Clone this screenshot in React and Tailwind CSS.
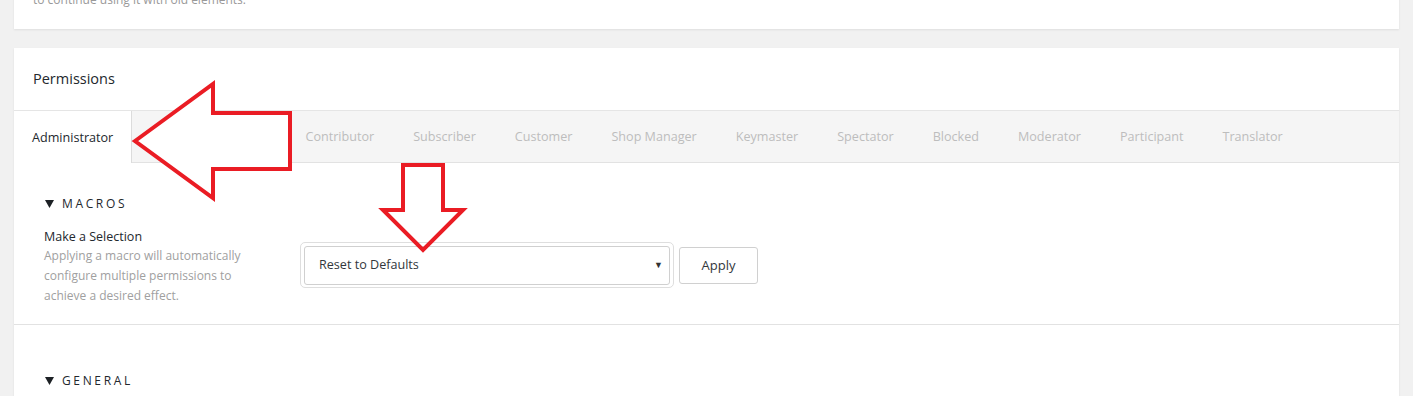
import React from "react";

const tabs = [
  "Administrator",
  "Editor",
  "Author",
  "Contributor",
  "Subscriber",
  "Customer",
  "Shop Manager",
  "Keymaster",
  "Spectator",
  "Blocked",
  "Moderator",
  "Participant",
  "Translator",
];

function Arrows() {
  return (
    <svg className="absolute left-0 top-0 pointer-events-none" width="1413" height="396">
      <polygon
        points="135,141 213,84 213,113 290,113 290,169 213,169 213,198"
        fill="#ffffff"
        stroke="#ea1c24"
        strokeWidth="4"
        strokeLinejoin="miter"
      />
      <polygon
        points="403,165 443,165 443,210 463,210 423,250 383,210 403,210"
        fill="none"
        stroke="#ea1c24"
        strokeWidth="4"
        strokeLinejoin="miter"
      />
    </svg>
  );
}

function SectionTitle({ children }) {
  return (
    <h3 className="flex items-center h-[16px] font-normal text-[#23282d]">
      <svg width="9" height="8" viewBox="0 0 9 8" className="ml-[1px] mr-[8px]">
        <polygon points="0,0 9,0 4.5,8" fill="#1d2125" />
      </svg>
      <span className="text-[12px] tracking-[0.22em]">{children}</span>
    </h3>
  );
}

export default function App() {
  return (
    <div
      className="relative h-[396px] overflow-hidden bg-[#f1f1f1] px-[14px] text-[13px] text-[#23282d]"
      style={{ fontFamily: "'Open Sans', 'Noto Sans', sans-serif" }}
    >
      {/* previous card, cut off at top */}
      <div className="-mt-[10px] bg-white shadow-[0_1px_2px_rgba(0,0,0,0.08)] px-[19px] pb-[19px]">
        <p className="leading-[20px] text-[12px] text-[#999]">
          to continue using it with old elements.
        </p>
      </div>

      {/* Permissions card */}
      <div className="mt-[19px] bg-white shadow-[0_1px_2px_rgba(0,0,0,0.08)]">
        <div className="h-[63px] flex items-center px-[19px] border-b border-[#e5e5e5]">
          <h2 className="text-[14.5px] font-normal text-[#23282d]">Permissions</h2>
        </div>

        {/* role tabs */}
        <div className="flex h-[52px] bg-[#f5f5f5] border-b border-[#e2e2e2] text-[12.6px]">
          {tabs.map((t, i) =>
            i === 0 ? (
              <div
                key={t}
                className="flex items-center pt-[2px] px-[18px] bg-white border-r border-[#dcdcdc] -mb-px text-[#23282d]"
              >
                {t}
              </div>
            ) : (
              <div key={t} className="flex items-center pt-[2px] px-[19.5px] text-[#bdbdbd]">
                {t}
              </div>
            )
          )}
        </div>

        {/* macros */}
        <div className="px-[30px] pt-[33px] pb-[18px] border-b border-[#e2e2e2]">
          <SectionTitle>MACROS</SectionTitle>
          <div className="flex mt-[16px]">
            <div className="w-[256px] text-[12px]">
              <div className="leading-[18px] text-[12.5px] text-[#23282d]">Make a Selection</div>
              <p className="leading-[20px] text-[#a0a0a0] w-[210px]">
                Applying a macro will automatically configure multiple permissions to achieve a desired effect.
              </p>
            </div>
            <div className="flex items-start gap-[5px] mt-[14px]">
              <div className="rounded-[5px] border border-[#dedede] px-[3px] pt-[3px] pb-[2px]">
                <div className="relative w-[366px] h-[39px] rounded-[3px] border border-[#d0d0d0] bg-white flex items-center pl-[14px]">
                  <span className="text-[12.6px] text-[#32373c]">Reset to Defaults</span>
                  <span className="absolute right-[6px] top-[11px] text-[9px] text-[#333]">▼</span>
                </div>
              </div>
              <button className="mt-[5px] h-[37px] w-[79px] rounded-[3px] border border-[#d0d0d0] bg-white text-[13px] text-[#32373c]">
                Apply
              </button>
            </div>
          </div>
        </div>

        <div className="px-[30px] pt-[48px] pb-[20px]">
          <SectionTitle>GENERAL</SectionTitle>
        </div>
      </div>

      <Arrows />
    </div>
  );
}
